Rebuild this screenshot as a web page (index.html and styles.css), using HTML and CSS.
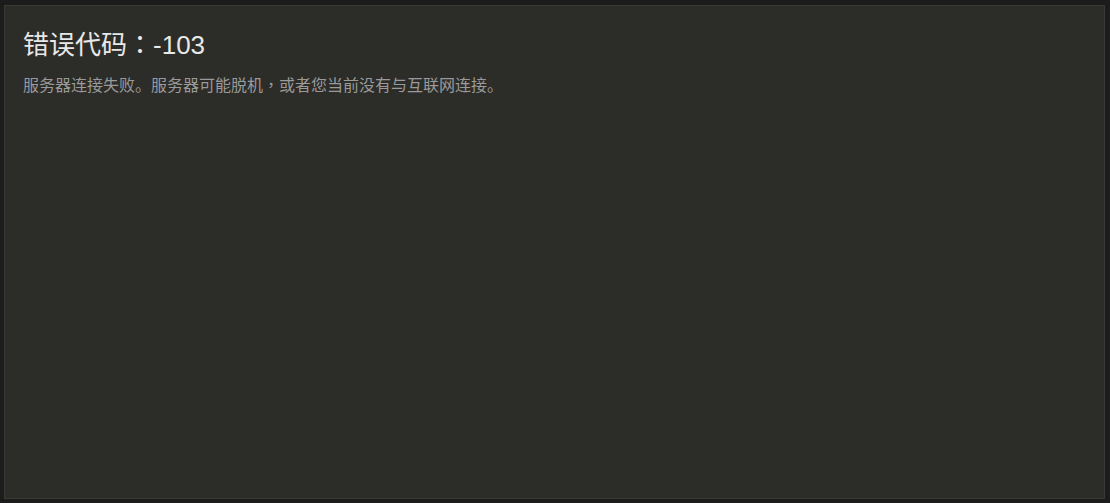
FILE: index.html
```html
<!DOCTYPE html>
<html lang="zh-CN">
<head>
    <meta charset="UTF-8">
    <meta name="viewport" content="width=device-width, initial-scale=1.0">
    <title>错误代码：-103</title>
    <link rel="stylesheet" href="styles.css">
</head>
<body>
    <div class="frame">
        <div class="panel">
            <h1 class="error-title">错误代码<span class="punct" lang="zh-TW">：</span>-103</h1>
            <p class="error-desc">服务器连接失败。服务器可能脱机<span class="punct" lang="zh-TW">，</span>或者您当前没有与互联网连接。</p>
        </div>
    </div>
</body>
</html>
```

FILE: styles.css
```css
html, body {
    height: 100%;
}
body {
    margin: 0;
    background-color: #1c1c1c;
    font-family: "Liberation Sans", "Noto Sans CJK SC", sans-serif;
}
.frame {
    box-sizing: border-box;
    height: 100%;
    padding: 5px 5px 4px 4px;
}
.panel {
    box-sizing: border-box;
    height: 100%;
    background-color: #2c2c28;
    border: 1px solid #383835;
    padding: 24px 18px;
}
.error-title {
    margin: 0;
    font-size: 26px;
    font-weight: normal;
    line-height: 30px;
    color: #e8e8e8;
}
.error-desc {
    margin: 16px 0 0;
    font-size: 16px;
    line-height: 20px;
    color: #9a9a9a;
}
.punct {
    font-family: "Noto Sans CJK TC", sans-serif;
    line-height: 0;
}
```
